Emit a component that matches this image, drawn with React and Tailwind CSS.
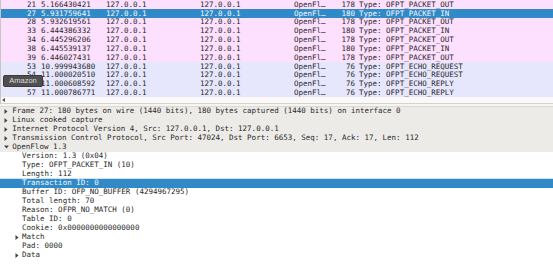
import React from "react";

const listRows = [
  ["21", "5.166430421", "178", "OFPT_PACKET_OUT", "pink"],
  ["27", "5.931759641", "180", "OFPT_PACKET_IN", "sel"],
  ["28", "5.932619561", "178", "OFPT_PACKET_OUT", "pink"],
  ["33", "6.444386332", "180", "OFPT_PACKET_IN", "pink"],
  ["34", "6.445296206", "178", "OFPT_PACKET_OUT", "pink"],
  ["38", "6.445539137", "180", "OFPT_PACKET_IN", "pink"],
  ["39", "6.446027431", "178", "OFPT_PACKET_OUT", "pink"],
  ["53", "10.999943680", "76", "OFPT_ECHO_REQUEST", "lav"],
  ["54", "11.000020510", "76", "OFPT_ECHO_REQUEST", "lav"],
  ["55", "11.000608592", "76", "OFPT_ECHO_REPLY", "lav"],
  ["57", "11.000786771", "76", "OFPT_ECHO_REPLY", "lav"],
];

const details = [
  { t: "Frame 27: 180 bytes on wire (1440 bits), 180 bytes captured (1440 bits) on interface 0", lvl: 0, exp: "r", grey: true },
  { t: "Linux cooked capture", lvl: 0, exp: "r", grey: true },
  { t: "Internet Protocol Version 4, Src: 127.0.0.1, Dst: 127.0.0.1", lvl: 0, exp: "r", grey: true },
  { t: "Transmission Control Protocol, Src Port: 47024, Dst Port: 6653, Seq: 17, Ack: 17, Len: 112", lvl: 0, exp: "r", grey: true },
  { t: "OpenFlow 1.3", lvl: 0, exp: "d", grey: true },
  { t: "Version: 1.3 (0x04)", lvl: 1 },
  { t: "Type: OFPT_PACKET_IN (10)", lvl: 1 },
  { t: "Length: 112", lvl: 1 },
  { t: "Transaction ID: 0", lvl: 1, sel: true },
  { t: "Buffer ID: OFP_NO_BUFFER (4294967295)", lvl: 1 },
  { t: "Total length: 70", lvl: 1 },
  { t: "Reason: OFPR_NO_MATCH (0)", lvl: 1 },
  { t: "Table ID: 0", lvl: 1 },
  { t: "Cookie: 0x0000000000000000", lvl: 1 },
  { t: "Match", lvl: 1, exp: "r" },
  { t: "Pad: 0000", lvl: 1 },
  { t: "Data", lvl: 1, exp: "r" },
];

function Arrow({ dir, color }) {
  if (dir === "d") {
    return (
      <svg width="5" height="4" viewBox="0 0 5 4" className="block">
        <path d="M0 0.5 L5 0.5 L2.5 3.5 Z" fill={color} />
      </svg>
    );
  }
  return (
    <svg width="4" height="5" viewBox="0 0 4 5" className="block">
      <path d="M0.5 0 L3.5 2.5 L0.5 5 Z" fill={color} />
    </svg>
  );
}

export default function App() {
  return (
    <div className="relative w-[553px] h-[274px] overflow-hidden bg-white font-['DejaVu_Sans_Mono',monospace] text-[7.5px] text-[#2a2a2a]">
      {/* packet list */}
      <div className="flex flex-col border-l border-[#c8c6c2]">
        {listRows.map(([no, time, len, info, kind]) => {
          const bg =
            kind === "sel"
              ? "bg-[#2f8ac7] text-[#f4f8fc]"
              : kind === "pink"
              ? "bg-[#fde0fd]"
              : "bg-[#e6e6fd]";
          return (
            <div key={no} className={`flex h-[8.83px] items-center whitespace-pre ${bg}`}>
              <span className="w-[35px] text-right">{no}</span>
              <span className="w-[70px] pl-[5px]">{time}</span>
              <span className="w-[94px]">127.0.0.1</span>
              <span className="w-[94px]">127.0.0.1</span>
              <span className="w-[40px]">OpenFl…</span>
              <span className="w-[21px] text-right">{len}</span>
              <span className="pl-[4px]">Type: {info}</span>
            </div>
          );
        })}
      </div>
      {/* horizontal scrollbar */}
      <div className="flex h-[6px] items-center bg-[#faf9f7] pl-[1px] border-l border-[#c8c6c2]">
        <svg width="3" height="4" viewBox="0 0 3 4" className="block">
          <path d="M3 0 L0 2 L3 4 Z" fill="#555" />
        </svg>
      </div>
      {/* splitter */}
      <div className="h-[1px] bg-[#d6d3ce]" />
      <div className="h-[1.5px] bg-[#f7f5f2]" />
      <div className="h-[1px] bg-[#dcd9d4]" />
      {/* details pane */}
      <div className="flex flex-col">
        {details.map((d, i) => {
          const cls = d.sel
            ? "bg-[#2f8ac7] text-[#f4f8fc] shadow-[0_-1px_0_#cfe3f2]"
            : d.grey
            ? "bg-[#edebe8]"
            : "bg-white";
          return (
            <div key={i} className={`flex h-[9px] items-center whitespace-pre ${cls}`}>
              <span className={`flex justify-center ${d.lvl === 0 ? "w-[12.3px] pl-[0.5px]" : "w-[22px] pl-[12px]"}`}>
                {d.exp ? <Arrow dir={d.exp} color={d.sel ? "#fff" : "#444"} /> : null}
              </span>
              <span>{d.t}</span>
            </div>
          );
        })}
      </div>
      {/* tooltip */}
      <div className="absolute left-[3px] top-[75px] flex h-[12px] w-[40px] items-center justify-center rounded-[2px] border border-[#3a3a3a] bg-[#4f4f4f] font-['Liberation_Sans',sans-serif] text-[7.5px] text-[#dedede]">
        Amazon
      </div>
    </div>
  );
}
